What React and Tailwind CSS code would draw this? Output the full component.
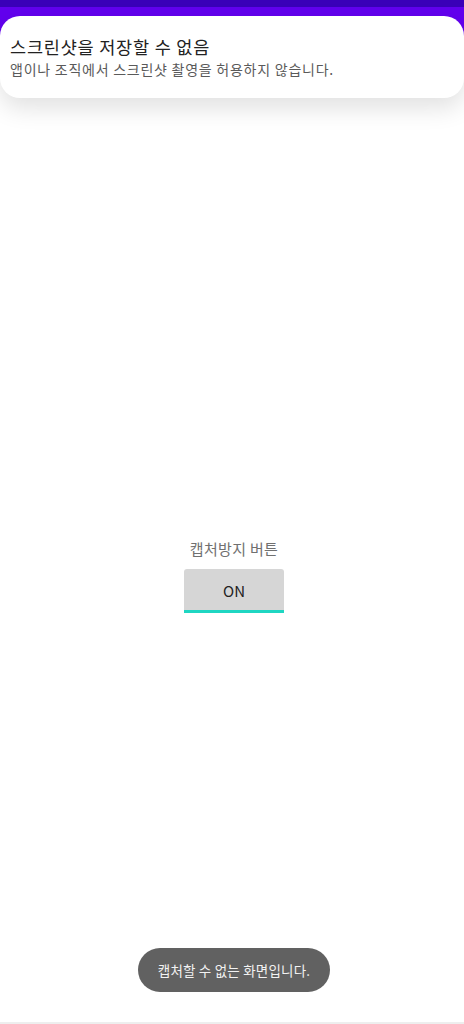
import React from "react";

const font = { fontFamily: '"Noto Sans CJK KR", "Noto Sans", sans-serif' };

const App = () => {
  return (
    <div
      className="relative w-[464px] h-[1024px] bg-white overflow-hidden flex flex-col"
      style={font}
    >
      {/* status bar + toolbar */}
      <div className="h-[7px] bg-[#3a00b8]" />
      <div className="h-[40px] bg-[#6200ee]" />

      {/* heads-up notification */}
      <div className="absolute left-0 right-0 top-[16px]">
        <div className="bg-white rounded-[20px] h-[82px] pl-[10px] pt-[20px] shadow-[0_10px_24px_rgba(0,0,0,0.12)]">
          <div className="text-[17.5px] leading-[22px] tracking-[0.8px] text-[#222]">
            스크린샷을 저장할 수 없음
          </div>
          <div className="text-[14px] leading-[20px] tracking-[0.75px] text-[#5a5a5a] mt-[1px]">
            앱이나 조직에서 스크린샷 촬영을 허용하지 않습니다.
          </div>
        </div>
      </div>

      {/* content */}
      <div className="flex flex-col items-center pt-[491px] pl-[4px]">
        <div className="text-[15px] leading-[22px] tracking-[0.3px] text-[#707070]">캡처방지 버튼</div>
        <button className="mt-[9px] w-[100px] h-[44px] bg-[#d6d6d6] rounded-t-[3px] border-b-[3px] border-[#1fd6c2] text-[15px] text-[#222] pt-[3px]">
          ON
        </button>
      </div>

      <div className="flex-1" />
      <div className="h-[2px] bg-[#eeeeee]" />

      {/* toast */}
      <div className="absolute left-[138px] top-[948px] w-[192px] h-[44px] rounded-full bg-[#616161] flex items-center justify-center">
        <span className="text-[13.5px] tracking-[0.2px] text-[#f2f2f2]">캡처할 수 없는 화면입니다.</span>
      </div>
    </div>
  );
};

export default App;
